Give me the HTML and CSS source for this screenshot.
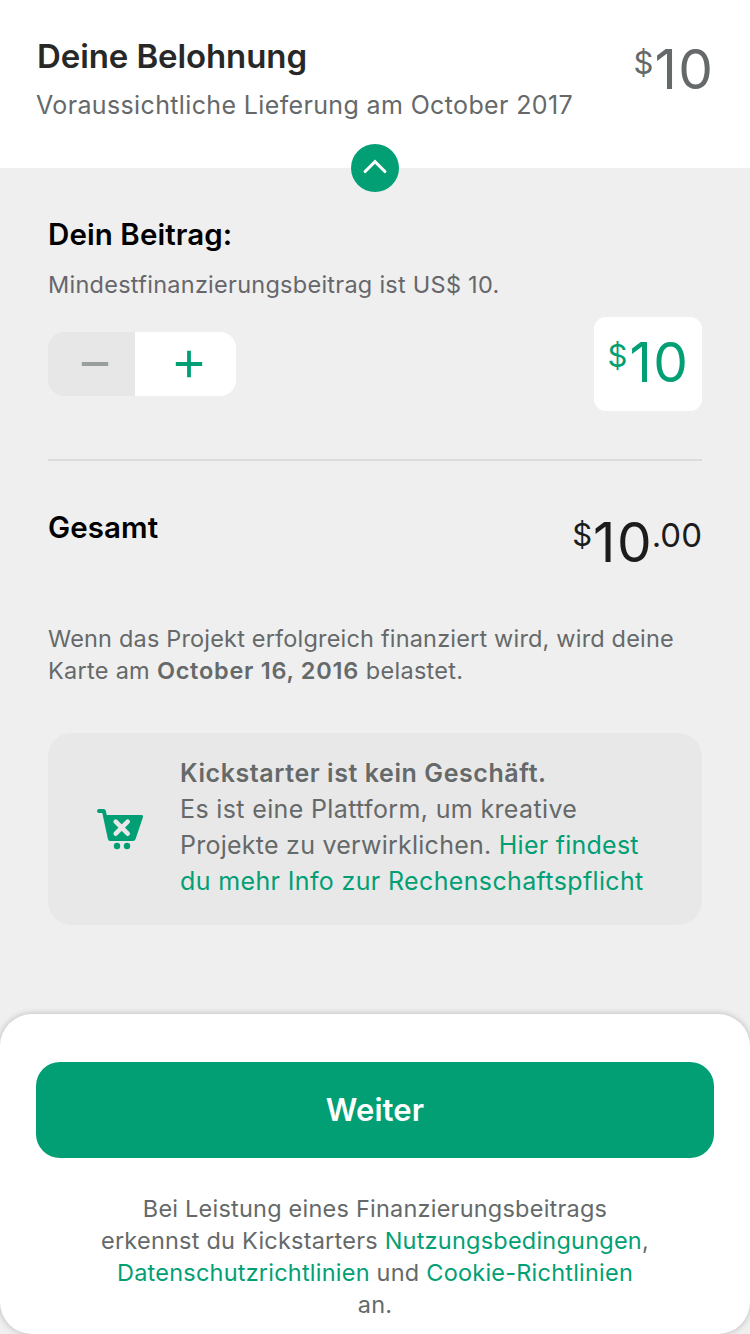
FILE: index.html
```html
<!DOCTYPE html>
<html lang="de">
<head>
<meta charset="utf-8">
<title>Deine Belohnung</title>
<link rel="stylesheet" href="styles.css">
</head>
<body>
<div class="screen">
  <header class="header">
    <div>
      <h1 class="title">Deine Belohnung</h1>
      <p class="subtitle">Voraussichtliche Lieferung am October 2017</p>
    </div>
    <div class="price price-header"><span class="currency">$</span><span class="amount"><span class="one">1</span>0</span></div>
    <button class="collapse" aria-label="Einklappen">
      <svg width="48" height="48" viewBox="0 0 48 48"><path d="M14.1 27.500 24 17.600 33.900 27.500" fill="none" stroke="#fff" stroke-width="3.1" stroke-linecap="round"/></svg>
    </button>
  </header>
  <main class="content">
    <h2 class="heading">Dein Beitrag:</h2>
    <p class="minimum">Mindestfinanzierungsbeitrag ist US$ 10.</p>
    <div class="contribution">
      <div class="stepper">
        <button class="step minus" aria-label="Weniger"><svg width="28" height="28" viewBox="0 0 28 28"><path d="M.8 14H27.200" stroke="#9b9e9e" stroke-width="3.8"/></svg></button>
        <button class="step plus" aria-label="Mehr"><svg width="28" height="28" viewBox="0 0 28 28"><path d="M.8 14H27.200M14 .8V27.200" stroke="#029f74" stroke-width="3.8"/></svg></button>
      </div>
      <div class="price price-box"><span class="currency">$</span><span class="amount"><span class="one">1</span>0</span></div>
    </div>
    <hr class="divider">
    <div class="total">
      <h2 class="heading">Gesamt</h2>
      <div class="price price-total"><span class="currency">$</span><span class="amount"><span class="one">1</span>0</span><span class="cents">.00</span></div>
    </div>
    <p class="charge">Wenn das Projekt erfolgreich finanziert wird, wird deine<br><span class="charge-date">Karte am <b>October 16, 2016</b> belastet.</span></p>
    <section class="notice">
      <svg class="cart" width="48" height="42" viewBox="0 0 48 42">
        <path d="M3 1H7.500Q9.500 1 9.900 3L10.700 7H45.500Q47.500 7 47 9L39.600 31Q38.900 33 37 33H14Q12.300 33 11.900 31L6.300 5H3A2 2 0 0 1 3 1Z" fill="#029f74"/>
        <path d="M19.700 13.700 31.700 25.700M31.700 13.700 19.700 25.700" stroke="#e8e8e8" stroke-width="4.600" stroke-linecap="round"/>
        <circle cx="21" cy="38" r="3.200" fill="#029f74"/><circle cx="31" cy="38" r="3.200" fill="#029f74"/>
      </svg>
      <p class="notice-text"><b>Kickstarter ist kein Geschäft.</b><br>Es ist eine Plattform, um kreative<br><span class="tight">Projekte zu verwirklichen. <a>Hier findest</a></span><br><a>du mehr Info zur Rechenschaftspflicht</a></p>
    </section>
  </main>
  <footer class="sheet">
    <button class="continue">Weiter</button>
    <p class="terms">Bei Leistung eines Finanzierungsbeitrags<br>erkennst du Kickstarters <a>Nutzungsbedingungen</a>,<br><a>Datenschutzrichtlinien</a> und <a>Cookie-Richtlinien</a><br>an.</p>
  </footer>
</div>
</body>
</html>
```
FILE: styles.css
```css
* { box-sizing: border-box; margin: 0; padding: 0; }
body { background: #efefef; font-family: Inter, "Liberation Sans", sans-serif; }
button { border: 0; font: inherit; }
svg { display: block; }
b { font-weight: 600; }
a { color: #029f74; }
.screen { width: 750px; height: 1334px; display: flex; flex-direction: column; background: #efefef; overflow: hidden; }

.header { position: relative; display: flex; justify-content: space-between; height: 168px; padding: 36px 37px 0 36px; background: #fff; }
.title { padding-left: 1px; font-size: 33px; line-height: 40px; font-weight: 600; letter-spacing: -.1px; color: #282828; white-space: nowrap; }
.subtitle { margin-top: 11px; font-size: 25px; line-height: 36px; letter-spacing: .36px; color: #656969; white-space: nowrap; }
.collapse { position: absolute; left: 351px; top: 144px; width: 48px; height: 48px; border-radius: 50%; background: #029f74; }

.price { display: flex; align-items: flex-start; line-height: 64px; white-space: nowrap; }
.currency { font-size: 31px; line-height: 38px; padding-top: 7px; margin-right: 1px; }
.amount { font-size: 55px; }
.one { letter-spacing: 1.5px; }
.cents { font-size: 33px; line-height: 38px; padding-top: 6px; }
.price-header { color: #656969; padding-top: 1px; }

.content { flex: 1; padding: 46px 48px 0; }
.heading { font-size: 29.5px; line-height: 40px; font-weight: 600; letter-spacing: .08px; color: #000; white-space: nowrap; }
.minimum { margin-top: 15px; font-size: 23.5px; line-height: 32px; letter-spacing: .26px; color: #66666b; white-space: nowrap; }
.contribution { display: flex; justify-content: space-between; align-items: center; height: 94px; margin-top: 16px; }
.stepper { display: flex; width: 188px; height: 64px; border-radius: 16px; overflow: hidden; }
.step { display: flex; align-items: center; }
.minus { width: 87px; padding-left: 33px; background: #e7e7e7; }
.plus { flex: 1; padding-left: 40px; background: #fff; }
.price-box { width: 108px; height: 94px; padding: 13px 14px 0 0; justify-content: flex-end; border-radius: 12px; background: #fff; color: #029f74; }
.price-box .currency { margin-right: 2px; }
.divider { height: 2px; margin-top: 48px; border: 0; background: #dcdcdc; }
.total { display: flex; justify-content: space-between; height: 162px; padding-top: 46px; }
.price-total { padding-top: 3px; color: #1c1c1c; }
.price-total .currency { padding-top: 6px; }
.charge { font-size: 23.5px; line-height: 32px; letter-spacing: .18px; color: #656969; white-space: nowrap; }
.charge-date { letter-spacing: .28px; }
.charge b { letter-spacing: .74px; }
.notice { display: flex; height: 192px; margin-top: 46px; padding: 22px 0 0 48px; border-radius: 24px; background: #e8e8e8; }
.cart { margin-top: 53px; }
.notice-text { margin-left: 36px; font-size: 25px; line-height: 36px; letter-spacing: .36px; color: #656969; white-space: nowrap; }
.notice-text b { letter-spacing: .58px; }
.tight { letter-spacing: .25px; }

.sheet { height: 320px; padding: 48px 36px 0; border-radius: 32px; background: #fff; box-shadow: 0 0 6px rgba(0, 0, 0, .24); }
.continue { display: block; width: 678px; height: 96px; padding-bottom: 2px; border-radius: 24px; background: #029f74; color: #fff; font-size: 31px; font-weight: 600; letter-spacing: .1px; }
.terms { margin-top: 35px; font-size: 23.5px; line-height: 32px; letter-spacing: .22px; color: #656969; text-align: center; white-space: nowrap; }
```
